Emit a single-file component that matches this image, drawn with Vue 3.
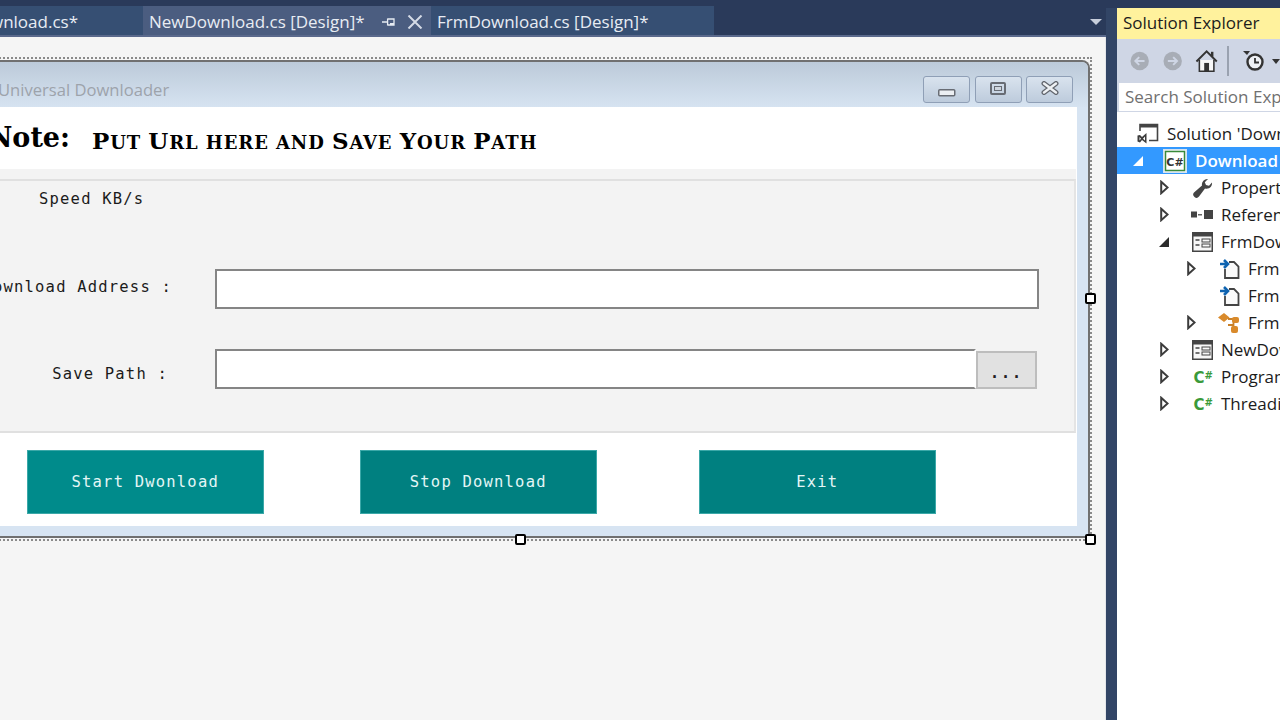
<script setup>
const rows = [
  { key: 's', label: "Solution 'Download'", cls: 'root', icon: 'solution' },
  { key: 'd', label: 'Download', cls: 'top selected', arrow: 'openw', icon: 'csproj' },
  { key: 'p', label: 'Properties', cls: 'l1', arrow: 'closed', icon: 'wrench' },
  { key: 'r', label: 'References', cls: 'l1', arrow: 'closed', icon: 'refs' },
  { key: 'f', label: 'FrmDownload.cs', cls: 'l1', arrow: 'open', icon: 'form' },
  { key: 'f1', label: 'FrmDownload.Designer.cs', cls: 'l2', arrow: 'closed', icon: 'file' },
  { key: 'f2', label: 'FrmDownload.resx', cls: 'l2', icon: 'file' },
  { key: 'f3', label: 'FrmDownload', cls: 'l2', arrow: 'closed', icon: 'cls' },
  { key: 'n', label: 'NewDownload.cs', cls: 'l1', arrow: 'closed', icon: 'form' },
  { key: 'pr', label: 'Program.cs', cls: 'l1', arrow: 'closed', icon: 'cs' },
  { key: 't', label: 'Threading.cs', cls: 'l1', arrow: 'closed', icon: 'cs' }
]
</script>

<template>
  <div class="ide">
    <section class="editor">
      <header class="tabstrip">
        <div class="tab first"><span>Download.cs*</span></div>
        <div class="tab active">
          <span class="tab-name">NewDownload.cs [Design]*</span>
          <svg class="pin" width="14" height="12" viewBox="0 0 14 12" fill="none" stroke="#e6ebf2" stroke-width="1.3">
            <path d="M0 6H5M5.600 2.600V9.400M5.600 3H12V9H5.600M8 7.600H12" />
          </svg>
          <svg class="close" width="16" height="14" viewBox="0 0 16 14" fill="none" stroke="#d5dbe6" stroke-width="2">
            <path d="M1.500 .5L14.500 13.500M14.500 .5L1.500 13.500" />
          </svg>
        </div>
        <div class="tab third"><span>FrmDownload.cs [Design]*</span></div>
        <svg class="overflow" width="12" height="6" viewBox="0 0 12 6"><path d="M0 0H12L6 6Z" fill="#c7cedb" /></svg>
      </header>

      <div class="designer">
        <div class="selection">
          <div class="form">
            <div class="titlebar">
              <span class="form-title">Universal Downloader</span>
              <div class="winbtns">
                <button class="winbtn">
                  <svg width="18" height="8" viewBox="0 0 18 8"><rect x=".75" y=".75" width="16" height="6" rx="1" fill="#eceff3" stroke="#686c74" stroke-width="1.500" /></svg>
                </button>
                <button class="winbtn raised">
                  <svg width="16" height="13" viewBox="0 0 16 13"><rect x="1" y="1" width="14" height="11" rx="1" fill="none" stroke="#686c74" stroke-width="2" /><rect x="4.500" y="4.500" width="7" height="4" fill="#cfd6df" stroke="#686c74" /></svg>
                </button>
                <button class="winbtn raised">
                  <svg width="18" height="14" viewBox="0 0 18 14"><path d="M3 2.500L15 11.500M15 2.500L3 11.500" stroke="#62666e" stroke-width="5" stroke-linecap="round" /><path d="M3 2.500L15 11.500M15 2.500L3 11.500" stroke="#eef1f4" stroke-width="2.400" stroke-linecap="round" /></svg>
                </button>
              </div>
            </div>
            <div class="client">
              <div class="note">
                <span class="note-label"><b>Note:</b></span>
                <span class="note-text"><span class="cap">P</span>ut <span class="cap">U</span>rl here and <span class="cap">S</span>ave <span class="cap">Y</span>our <span class="cap">P</span>ath</span>
              </div>
              <div class="panel">
                <div class="speed">Speed KB/s</div>
                <div class="field address">
                  <label>Download Address :</label>
                  <div class="input wide"></div>
                </div>
                <div class="field save">
                  <label class="save-label">Save Path :</label>
                  <div class="input narrow"></div>
                  <button class="browse">...</button>
                </div>
              </div>
              <div class="actions">
                <button class="action start">Start Dwonload</button>
                <button class="action stop">Stop Download</button>
                <button class="action exit">Exit</button>
              </div>
            </div>
          </div>
          <i class="handle h-right"></i>
          <i class="handle h-bottom"></i>
          <i class="handle h-corner"></i>
        </div>
      </div>
    </section>

    <aside class="explorer">
      <div class="explorer-title">Solution Explorer</div>
      <div class="toolbar">
        <svg class="tb back" width="20" height="20" viewBox="0 0 20 20"><circle cx="10" cy="10" r="9.500" fill="#a8adb6" /><path d="M15 10H6M9.500 6L5.500 10L9.500 14" fill="none" stroke="#cfd6e5" stroke-width="2" /></svg>
        <svg class="tb fwd" width="20" height="20" viewBox="0 0 20 20"><circle cx="10" cy="10" r="9.500" fill="#a8adb6" /><path d="M5 10H14M10.500 6L14.500 10L10.500 14" fill="none" stroke="#cfd6e5" stroke-width="2" /></svg>
        <svg class="tb home" width="24" height="24" viewBox="0 0 24 24"><path d="M1.500 12.500L12 2L22.500 12.500" fill="none" stroke="#333" stroke-width="2" /><path d="M4.500 11V22.500H19.500V11" fill="#f7f7f7" stroke="#333" stroke-width="1.600" /><rect x="9.500" y="14" width="5" height="8.500" fill="#333" /><rect x="16.500" y="2.500" width="2.500" height="5" fill="#333" /></svg>
        <span class="tb-sep"></span>
        <svg class="tb hist" width="24" height="22" viewBox="0 0 24 22"><path d="M1 1H8L5 5Z" fill="#333" /><circle cx="13" cy="12" r="7.500" fill="#eef0f4" stroke="#333" stroke-width="2.400" /><path d="M13 8V12.500H17" fill="none" stroke="#333" stroke-width="1.800" /></svg>
        <svg class="tb caret" width="8" height="5" viewBox="0 0 8 5"><path d="M0 0H8L4 5Z" fill="#333" /></svg>
      </div>
      <div class="search">Search Solution Explorer</div>
      <ul class="tree">
        <li v-for="r in rows" :key="r.key" class="row" :class="r.cls">
          <span class="arrow">
            <svg v-if="r.arrow === 'closed'" width="9" height="15" viewBox="0 0 9 15"><path d="M1.200 1.800L7.600 7.500L1.200 13.200Z" fill="#fff" stroke="#3c3c3c" stroke-width="2" /></svg>
            <svg v-else-if="r.arrow === 'open'" width="10" height="10" viewBox="0 0 10 10"><path d="M10 0V10H0Z" fill="#2b2b2b" /></svg>
            <svg v-else-if="r.arrow === 'openw'" width="10" height="10" viewBox="0 0 10 10"><path d="M10 0V10H0Z" fill="#fff" /></svg>
          </span>
          <span class="icon">
            <svg v-if="r.icon === 'solution'" width="22" height="22" viewBox="0 0 22 22">
              <path d="M3 8V1.500H20.500V17.500H12" fill="none" stroke="#444" stroke-width="1.600" /><rect x="3" y="1" width="18" height="3.500" fill="#444" />
              <path d="M.5 12.500L3 12L5 14L9.500 10V20.500L5 17L3 19.500L.5 18.500ZM2.500 14V17.500L4 15.700ZM8 13.500L6 15.700L8 17.500Z" fill="#3c3c3c" fill-rule="evenodd" />
            </svg>
            <svg v-else-if="r.icon === 'csproj'" width="24" height="24" viewBox="0 0 24 24">
              <rect x=".5" y=".5" width="23" height="23" fill="#f0f5fb" stroke="#d6e3f1" />
              <rect x="2.500" y="2.500" width="19" height="19" fill="#fff" stroke="#3a8a3a" stroke-width="1.500" />
              <text x="12" y="16.500" class="cs-mini">C#</text>
            </svg>
            <svg v-else-if="r.icon === 'wrench'" width="20" height="20" viewBox="0 0 20 20">
              <path d="M19 4.500A5.500 5.500 0 0 1 12 10.500L6 18.500A2.800 2.800 0 0 1 1 14.500L9 7.500A5.500 5.500 0 0 1 15 1L11.800 4.200L13 7L16 7.800Z" fill="#444" />
            </svg>
            <svg v-else-if="r.icon === 'refs'" width="22" height="12" viewBox="0 0 22 12">
              <rect x="0" y="2.500" width="6" height="6" fill="#444" /><rect x="7" y="5" width="4" height="1.500" fill="#666" /><rect x="13" y="1" width="9" height="9" fill="#444" />
            </svg>
            <svg v-else-if="r.icon === 'form'" width="21" height="20" viewBox="0 0 21 20">
              <rect x=".75" y=".75" width="19.500" height="18.500" fill="#f7f7f7" stroke="#444" stroke-width="1.500" /><rect x="1" y="1" width="19" height="3.500" fill="#444" />
              <path d="M3.500 8H7.500M3.500 13H7.500" stroke="#444" stroke-width="1.500" /><rect x="10" y="7" width="8" height="3" fill="none" stroke="#444" /><rect x="10" y="12" width="8" height="3" fill="none" stroke="#444" />
            </svg>
            <svg v-else-if="r.icon === 'file'" width="20" height="20" viewBox="0 0 20 20">
              <path d="M9 3H14L18.500 7.500V19H5V10" fill="#fafafa" stroke="#444" stroke-width="1.800" />
              <path d="M0 5H7M4 1L8 5L4 9" fill="none" stroke="#0e63b0" stroke-width="2.600" />
            </svg>
            <svg v-else-if="r.icon === 'cls'" width="22" height="20" viewBox="0 0 22 20">
              <path d="M6 0L11.500 4.500L6 9L0 4.500Z" fill="#d98a2b" /><path d="M10 6H15.500V14M10 12H15" fill="none" stroke="#c9812a" stroke-width="1.800" /><rect x="14" y="4" width="7" height="6" rx="2" fill="#d98a2b" /><rect x="13" y="13" width="7" height="7" rx="2" fill="#d98a2b" />
            </svg>
            <span v-else-if="r.icon === 'cs'" class="cs-glyph">C<small>#</small></span>
          </span>
          <span class="row-label">{{ r.label }}</span>
        </li>
      </ul>
    </aside>
  </div>
</template>

<style scoped>
.ide {
  width: 1280px;
  height: 720px;
  overflow: hidden;
  display: flex;
  background: #2a3a5a;
  font-family: "Open Sans", "Noto Sans", sans-serif;
}
.editor {
  width: 1106px;
  flex: none;
  display: flex;
  flex-direction: column;
}
.tabstrip {
  height: 37px;
  flex: none;
  box-sizing: border-box;
  padding-top: 6px;
  display: flex;
  border-bottom: 2px solid #5a698c;
  color: #e8ecf3;
  font-size: 17px;
}
.tab {
  height: 29px;
  display: flex;
  align-items: center;
  overflow: hidden;
  white-space: nowrap;
  box-sizing: border-box;
  padding-top: 2px;
}
.tab.first {
  width: 143px;
  flex: none;
  justify-content: flex-end;
  padding-right: 65px;
  background: #364f73;
}
.tab.first span { flex: none; }
.tab.active {
  width: 288px;
  flex: none;
  padding-left: 6px;
  background: #4b5d80;
}
.tab-name { width: 233px; flex: none; }
.close { margin-left: 11px; }
.tab.third {
  width: 283px;
  flex: none;
  padding-left: 6px;
  background: #364f73;
}
.overflow {
  margin: 13px 0 0 376px;
}
.designer {
  flex: 1;
  background: #f5f5f5;
  box-sizing: border-box;
  padding-top: 20px;
  border-right: 1px solid #e4e6ea;
}
.selection {
  position: relative;
  box-sizing: border-box;
  width: 1132px;
  height: 484px;
  margin-left: -40px;
  border: 2px dotted #8a8a8a;
  border-left: 0;
  padding: 1px 0;
}
.form {
  height: 478px;
  box-sizing: border-box;
  border: 2px solid #707070;
  border-left: 0;
  border-top-right-radius: 8px;
  background: #d7e4f2;
  display: flex;
  flex-direction: column;
}
.titlebar {
  height: 45px;
  flex: none;
  display: flex;
  justify-content: space-between;
  background: linear-gradient(#bccad9, #d6e3f1);
  border-top-right-radius: 6px;
}
.form-title {
  margin: 17px 0 0 38px;
  font-size: 16.600px;
  line-height: 22px;
  color: #9da3ab;
}
.winbtns {
  display: flex;
  gap: 4.500px;
  margin: 14px 15px 0 0;
}
.winbtn {
  width: 47px;
  height: 27px;
  padding: 0;
  box-sizing: border-box;
  border: 1px solid #8f9fb6;
  border-radius: 3px;
  background: linear-gradient(#d9e3ee, #bdcbdc);
  display: flex;
  align-items: flex-end;
  justify-content: center;
  padding-bottom: 5px;
}
.winbtn.raised {
  align-items: center;
  padding-bottom: 3px;
}
.client {
  width: 1117px;
  height: 419px;
  flex: none;
  background: #fff;
  display: flex;
  flex-direction: column;
}
.note {
  height: 62px;
  flex: none;
  display: flex;
  align-items: center;
  color: #000;
  white-space: nowrap;
}
.note-label {
  width: 110px;
  flex: none;
  display: flex;
  justify-content: flex-end;
  font-family: "DejaVu Serif", serif;
  font-size: 27px;
  margin-top: -2px;
}
.note-text {
  margin-left: 22px;
  margin-top: 4px;
  font-family: "DejaVu Serif", serif;
  font-weight: 700;
  text-transform: uppercase;
  font-size: 18px;
  letter-spacing: .9px;
}
.cap { font-size: 23px; }
.panel {
  box-sizing: border-box;
  flex: none;
  margin: 10px 1px 0 0;
  height: 254px;
  background: #f3f3f3;
  border-top: 2px solid #e0e0e0;
  border-bottom: 2px solid #e0e0e0;
  border-right: 2px solid #e4e4e4;
  box-shadow: 0 -10px 0 #f3f3f3;
  font-family: "DejaVu Sans Mono", monospace;
  font-size: 15.500px;
  letter-spacing: 1.200px;
  color: #1b1b1b;
  display: flex;
  flex-direction: column;
}
.speed {
  margin: 8px 0 0 79px;
  line-height: 20px;
}
.field {
  display: flex;
  align-items: center;
  height: 40px;
}
.field label {
  flex: none;
  text-align: right;
  white-space: nowrap;
}
.address { margin-top: 60px; }
.address label { width: 212px; padding-bottom: 5px; }
.save { margin-top: 40px; }
.save-label { width: 208px; padding-top: 10px; }
.input {
  height: 40px;
  box-sizing: border-box;
  background: #fff;
  border: 2px solid #858585;
}
.address .input { margin: 0 0 0 43px; width: 824px; }
.save .input { margin: 0 0 0 47px; width: 761px; border-right: 2px solid #fff; }
.browse {
  width: 61px;
  height: 38px;
  margin-top: 2px;
  padding: 6px 0 0;
  box-sizing: border-box;
  background: #e1e1e1;
  border: 2px solid #bdbdbd;
  font: 700 15px "DejaVu Sans Mono", monospace;
  letter-spacing: 2px;
  color: #222;
}
.actions {
  flex: 1;
  display: flex;
  padding: 17px 0 0 67px;
}
.action {
  width: 236.500px;
  height: 64px;
  padding: 0;
  border: 0;
  color: #e4f6f6;
  font-family: "DejaVu Sans Mono", monospace;
  font-size: 15.500px;
  letter-spacing: 1.200px;
  flex: none;
  box-shadow: inset 0 0 0 1px #3ba8a8;
}
.start { background: #008b8b; }
.stop { background: #008080; margin-left: 96.500px; }
.exit { background: #008080; margin-left: 102.500px; }
.handle {
  position: absolute;
  width: 7px;
  height: 7px;
  background: #fff;
  border: 2px solid #000;
  border-radius: 2px;
}
.h-right { right: -6px; top: 234px; }
.h-bottom { left: 555px; bottom: -6px; }
.h-corner { right: -6px; bottom: -6px; }

.explorer {
  margin-left: 11px;
  flex: 1;
  display: flex;
  flex-direction: column;
  margin-top: 8px;
  background: #fff;
  box-shadow: -11px 0 0 #324566;
  min-width: 0;
}
.explorer-title {
  height: 31px;
  flex: none;
  box-sizing: border-box;
  padding-left: 6px;
  background: #fff29d;
  color: #1c1c1c;
  font-size: 17px;
  line-height: 29px;
  white-space: nowrap;
}
.toolbar {
  height: 44px;
  flex: none;
  background: #cfd6e5;
  display: flex;
  align-items: center;
  padding-left: 13px;
}
.fwd { margin-left: 14px; }
.home { margin-left: 12px; }
.tb-sep {
  width: 2px;
  height: 30px;
  margin-left: 9px;
  background: #9aa2b0;
  flex: none;
}
.hist { margin-left: 13px; flex: none; }
.caret { margin-left: 6px; flex: none; }
.search {
  height: 29px;
  flex: none;
  box-sizing: border-box;
  border-left: 2px solid #cfd6e5;
  border-bottom: 1px solid #cfd6e5;
  padding-left: 6px;
  background: #fff;
  color: #707070;
  font-size: 17px;
  line-height: 28px;
  white-space: nowrap;
  overflow: hidden;
}
.tree {
  list-style: none;
  margin: 8px 0 0;
  padding: 0;
  background: #fff;
  flex: 1;
  overflow: hidden;
  font-size: 17px;
  color: #1c1c1c;
}
.row {
  height: 27px;
  display: flex;
  align-items: center;
  white-space: nowrap;
}
.row-label { margin-top: -1px; }
.row.selected {
  background: #3399ff;
  color: #fff;
  font-weight: 600;
}
.arrow {
  width: 20px;
  flex: none;
  display: flex;
  justify-content: center;
  align-items: center;
}
.icon {
  flex: none;
  width: 47px;
  box-sizing: border-box;
  padding-right: 8px;
  display: flex;
  justify-content: flex-end;
  align-items: center;
}
.row.root .icon { width: 30px; padding-right: 0; justify-content: flex-start; }
.row.top { padding-left: 11px; }
.row.l1 { padding-left: 37px; }
.row.l2 { padding-left: 64px; }
.cs-mini {
  font: 700 11px "DejaVu Sans", sans-serif;
  fill: #333;
  text-anchor: middle;
}
.cs-glyph {
  font: 700 15px "DejaVu Sans", sans-serif;
  color: #3a9a3a;
  line-height: 1;
  margin-top: 3px;
}
.cs-glyph small {
  font-size: 10px;
  vertical-align: 4px;
}
</style>

<style>
html, body { margin: 0; background: #2a3a5a; }
</style>
